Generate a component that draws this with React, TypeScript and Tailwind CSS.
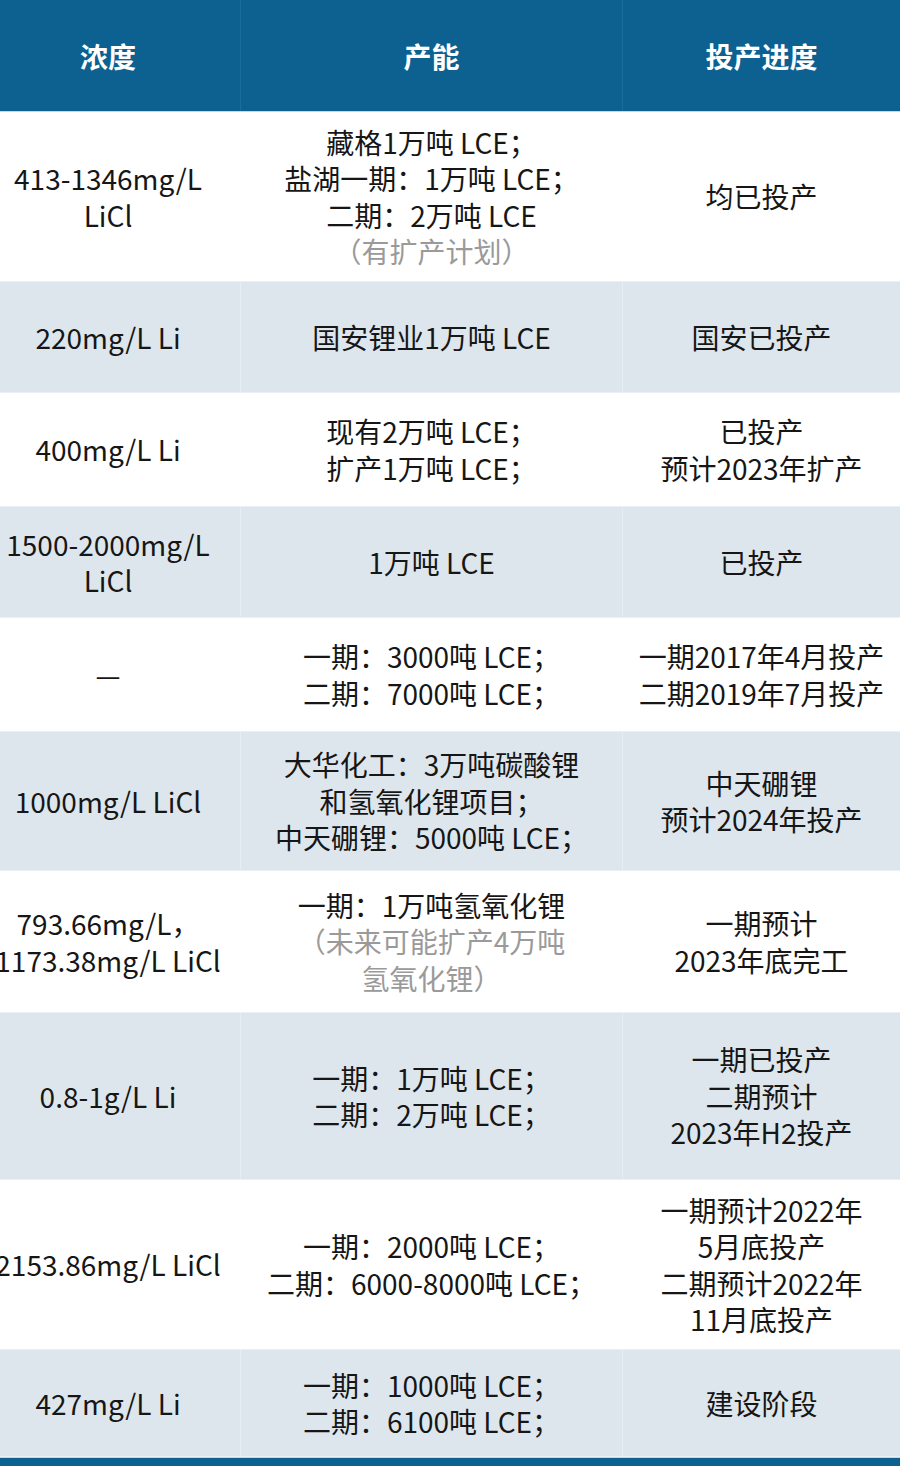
type Line = { text: string; muted?: boolean };
type Row = {
  height: string;
  shaded: boolean;
  concentration: Line[];
  capacity: Line[];
  progress: Line[];
};

const l = (text: string, muted = false): Line => ({ text, muted });

const rows: Row[] = [
  {
    height: "h-[169px]",
    shaded: false,
    concentration: [l("413-1346mg/L"), l("LiCl")],
    capacity: [l("藏格1万吨 LCE；"), l("盐湖一期：1万吨 LCE；"), l("二期：2万吨 LCE"), l("（有扩产计划）", true)],
    progress: [l("均已投产")],
  },
  {
    height: "h-[112px]",
    shaded: true,
    concentration: [l("220mg/L Li")],
    capacity: [l("国安锂业1万吨 LCE")],
    progress: [l("国安已投产")],
  },
  {
    height: "h-[113px]",
    shaded: false,
    concentration: [l("400mg/L Li")],
    capacity: [l("现有2万吨 LCE；"), l("扩产1万吨 LCE；")],
    progress: [l("已投产"), l("预计2023年扩产")],
  },
  {
    height: "h-[112px]",
    shaded: true,
    concentration: [l("1500-2000mg/L"), l("LiCl")],
    capacity: [l("1万吨 LCE")],
    progress: [l("已投产")],
  },
  {
    height: "h-[113px]",
    shaded: false,
    concentration: [l("—")],
    capacity: [l("一期：3000吨 LCE；"), l("二期：7000吨 LCE；")],
    progress: [l("一期2017年4月投产"), l("二期2019年7月投产")],
  },
  {
    height: "h-[140px]",
    shaded: true,
    concentration: [l("1000mg/L LiCl")],
    capacity: [l("大华化工：3万吨碳酸锂"), l("和氢氧化锂项目；"), l("中天硼锂：5000吨 LCE；")],
    progress: [l("中天硼锂"), l("预计2024年投产")],
  },
  {
    height: "h-[141px]",
    shaded: false,
    concentration: [l("793.66mg/L，"), l("1173.38mg/L LiCl")],
    capacity: [l("一期：1万吨氢氧化锂"), l("（未来可能扩产4万吨", true), l("氢氧化锂）", true)],
    progress: [l("一期预计"), l("2023年底完工")],
  },
  {
    height: "h-[168px]",
    shaded: true,
    concentration: [l("0.8-1g/L Li")],
    capacity: [l("一期：1万吨 LCE；"), l("二期：2万吨 LCE；")],
    progress: [l("一期已投产"), l("二期预计"), l("2023年H2投产")],
  },
  {
    height: "h-[169px]",
    shaded: false,
    concentration: [l("2153.86mg/L LiCl")],
    capacity: [l("一期：2000吨 LCE；"), l("二期：6000-8000吨 LCE；")],
    progress: [l("一期预计2022年"), l("5月底投产"), l("二期预计2022年"), l("11月底投产")],
  },
  {
    height: "h-[108px]",
    shaded: true,
    concentration: [l("427mg/L Li")],
    capacity: [l("一期：1000吨 LCE；"), l("二期：6100吨 LCE；")],
    progress: [l("建设阶段")],
  },
];

function Cell({ lines, className = "" }: { lines: Line[]; className?: string }) {
  return (
    <div className={`flex flex-col items-center justify-center text-center ${className}`}>
      {lines.map((line, i) => (
        <span
          key={i}
          className={`whitespace-nowrap leading-[36.5px] ${line.muted ? "text-[#9a9a9a]" : "text-[#161616]"}`}
        >
          {line.text}
        </span>
      ))}
    </div>
  );
}

export default function App() {
  return (
    <div
      className="w-[900px] h-[1466px] overflow-hidden bg-white text-[28px]"
      style={{ fontFamily: '"Noto Sans CJK SC", "Noto Sans", sans-serif' }}
    >
      {/* 表头 */}
      <div className="grid grid-cols-[240px_382px_278px] h-[112px] bg-[#0c6191] border-b border-[#c9d6e0] font-bold text-white">
        <div className="flex items-center justify-center pr-[24px]">浓度</div>
        <div className="flex items-center justify-center border-l border-[#1a6c9b]">产能</div>
        <div className="flex items-center justify-center border-l border-[#1a6c9b]">投产进度</div>
      </div>

      {rows.map((row, i) => (
        <div
          key={i}
          className={`grid grid-cols-[240px_382px_278px] ${row.height} ${
            row.shaded ? "bg-[#dee6ed] border-y border-[#eaf0f5]" : "bg-white"
          }`}
        >
          <Cell lines={row.concentration} className="pr-[24px] overflow-visible" />
          <Cell
            lines={row.capacity}
            className={`border-l ${row.shaded ? "border-[#e6edf3]" : "border-white"}`}
          />
          <Cell
            lines={row.progress}
            className={`border-l ${row.shaded ? "border-[#e6edf3]" : "border-white"}`}
          />
        </div>
      ))}

      <div className="h-[9px] bg-[#0c6191] border-t border-[#c9d6e0]" />
    </div>
  );
}
